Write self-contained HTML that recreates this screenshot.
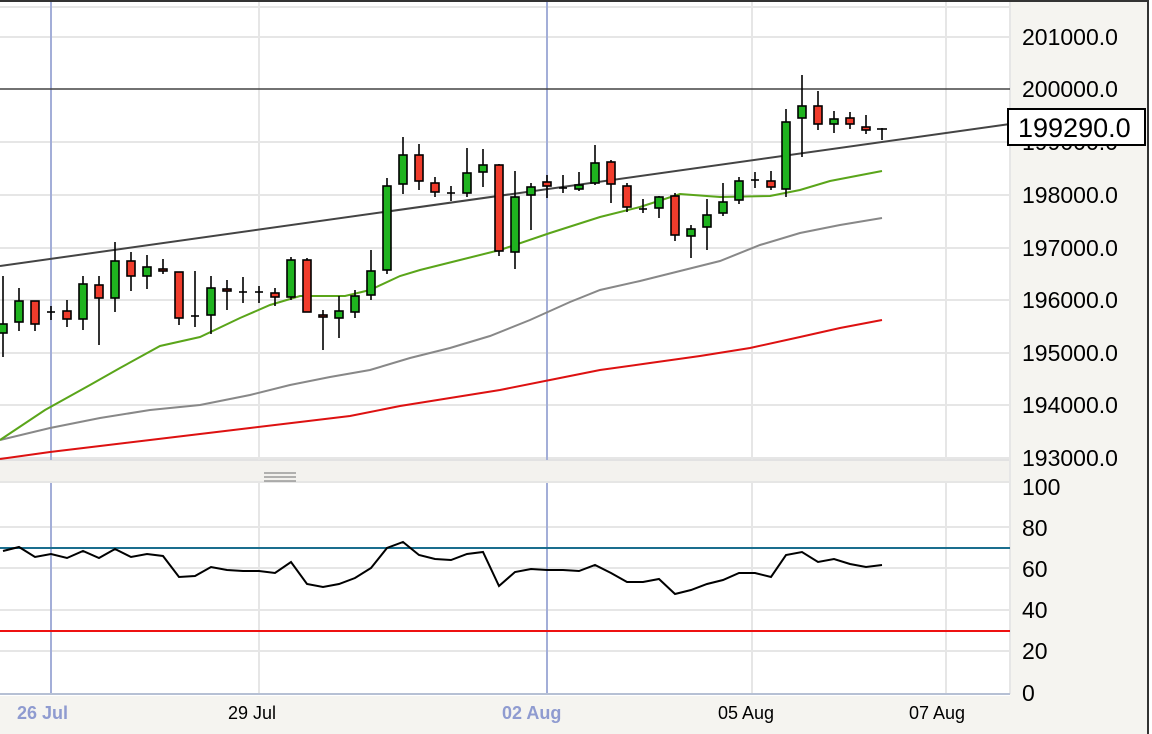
<!DOCTYPE html>
<html><head><meta charset="utf-8"><style>
html,body{margin:0;padding:0;background:#fff;width:1152px;height:734px;overflow:hidden}
svg{display:block;font-family:"Liberation Sans",Arial,sans-serif}
</style></head><body>
<svg width="1152" height="734" viewBox="0 0 1152 734">
<rect x="0" y="0" width="1152" height="734" fill="#fff"/>
<rect x="1010" y="0" width="138" height="734" fill="#f5f4f0"/>
<rect x="0" y="696" width="1010" height="38" fill="#f5f4f0"/>
<rect x="0" y="461" width="1010" height="22" fill="#f3f2ee"/>
<line x1="0" y1="460" x2="1010" y2="460" stroke="#e2e2e2" stroke-width="2"/>
<line x1="0" y1="482" x2="1010" y2="482" stroke="#e2e2e2" stroke-width="1.5"/>
<g stroke="#888" stroke-width="1.2"><line x1="264" y1="473" x2="296" y2="473"/><line x1="264" y1="477" x2="296" y2="477"/><line x1="264" y1="481" x2="296" y2="481"/></g>
<g stroke="#e6e6e6" stroke-width="2">
<line x1="0" y1="7" x2="1010" y2="7"/>
<line x1="0" y1="37" x2="1010" y2="37"/>
<line x1="0" y1="142" x2="1010" y2="142"/>
<line x1="0" y1="195" x2="1010" y2="195"/>
<line x1="0" y1="248" x2="1010" y2="248"/>
<line x1="0" y1="300" x2="1010" y2="300"/>
<line x1="0" y1="353" x2="1010" y2="353"/>
<line x1="0" y1="405" x2="1010" y2="405"/>
<line x1="0" y1="458" x2="1010" y2="458"/>
<line x1="259" y1="0" x2="259" y2="460"/><line x1="752" y1="0" x2="752" y2="460"/><line x1="946" y1="0" x2="946" y2="460"/>
<line x1="259" y1="483" x2="259" y2="694"/><line x1="752" y1="483" x2="752" y2="694"/><line x1="946" y1="483" x2="946" y2="694"/>
<line x1="0" y1="527" x2="1010" y2="527"/><line x1="0" y1="568" x2="1010" y2="568"/><line x1="0" y1="610" x2="1010" y2="610"/><line x1="0" y1="651" x2="1010" y2="651"/>
<line x1="1010" y1="0" x2="1010" y2="694"/>
</g>
<g stroke="#a3aed8" stroke-width="2">
<line x1="51" y1="0" x2="51" y2="460"/><line x1="547" y1="0" x2="547" y2="460"/>
<line x1="51" y1="483" x2="51" y2="694"/><line x1="547" y1="483" x2="547" y2="694"/>
</g>
<line x1="0" y1="694" x2="1010" y2="694" stroke="#b6c0d4" stroke-width="2"/>
<polyline fill="none" stroke="#dd1111" stroke-width="2" points="0,459 50,452 100,446 150,440 200,434 250,428 300,422 350,416 400,406 450,398 500,390 550,380 600,370 650,363 700,356 750,348 800,337 840,328 882,320"/>
<polyline fill="none" stroke="#888" stroke-width="2" points="0,440 50,428 100,418 150,410 200,405 250,395 290,385 330,377 370,370 410,358 450,348 490,336 530,320 570,302 600,290 640,281 680,271 720,261 760,245 800,233 840,225 882,218"/>
<polyline fill="none" stroke="#5aa51a" stroke-width="2" points="0,440 45,410 90,385 120,368 160,346 200,337 240,318 270,305 300,296 345,296 370,290 400,276 420,270 460,260 500,250 550,233 600,217 640,207 680,194 720,197 770,196 800,190 830,181 882,171"/>
<line x1="0" y1="89" x2="1010" y2="89" stroke="#444" stroke-width="1.5"/>
<line x1="0" y1="266" x2="1010" y2="124" stroke="#444" stroke-width="2"/>
<g stroke="#000" stroke-width="1.6">
<line x1="3" y1="276" x2="3" y2="357"/><rect x="-1" y="324" width="8" height="9" fill="#1fb31f"/>
<line x1="19" y1="288" x2="19" y2="331"/><rect x="15" y="301" width="8" height="21" fill="#1fb31f"/>
<line x1="35" y1="301" x2="35" y2="331"/><rect x="31" y="301" width="8" height="23" fill="#f03c2c"/>
<line x1="51" y1="306" x2="51" y2="320"/><line x1="47" y1="312" x2="55" y2="312"/>
<line x1="67" y1="300" x2="67" y2="327"/><rect x="63" y="311" width="8" height="8" fill="#f03c2c"/>
<line x1="83" y1="276" x2="83" y2="330"/><rect x="79" y="284" width="8" height="35" fill="#1fb31f"/>
<line x1="99" y1="276" x2="99" y2="345"/><rect x="95" y="285" width="8" height="13" fill="#f03c2c"/>
<line x1="115" y1="242" x2="115" y2="312"/><rect x="111" y="261" width="8" height="37" fill="#1fb31f"/>
<line x1="131" y1="252" x2="131" y2="291"/><rect x="127" y="261" width="8" height="15" fill="#f03c2c"/>
<line x1="147" y1="255" x2="147" y2="289"/><rect x="143" y="267" width="8" height="9" fill="#1fb31f"/>
<line x1="163" y1="259" x2="163" y2="274"/><rect x="159" y="269" width="8" height="2" fill="#f03c2c"/>
<line x1="179" y1="272" x2="179" y2="325"/><rect x="175" y="272" width="8" height="46" fill="#f03c2c"/>
<line x1="195" y1="271" x2="195" y2="327"/><line x1="191" y1="316" x2="199" y2="316"/>
<line x1="211" y1="276" x2="211" y2="334"/><rect x="207" y="288" width="8" height="27" fill="#1fb31f"/>
<line x1="227" y1="280" x2="227" y2="310"/><rect x="223" y="289" width="8" height="2" fill="#f03c2c"/>
<line x1="243" y1="277" x2="243" y2="303"/><line x1="239" y1="292" x2="247" y2="292"/>
<line x1="259" y1="286" x2="259" y2="303"/><line x1="255" y1="292" x2="263" y2="292"/>
<line x1="275" y1="288" x2="275" y2="306"/><rect x="271" y="293" width="8" height="4" fill="#f03c2c"/>
<line x1="291" y1="257" x2="291" y2="300"/><rect x="287" y="260" width="8" height="37" fill="#1fb31f"/>
<line x1="307" y1="258" x2="307" y2="312"/><rect x="303" y="260" width="8" height="52" fill="#f03c2c"/>
<line x1="323" y1="310" x2="323" y2="350"/><rect x="319" y="315" width="8" height="2" fill="#f03c2c"/>
<line x1="339" y1="296" x2="339" y2="338"/><rect x="335" y="311" width="8" height="7" fill="#1fb31f"/>
<line x1="355" y1="290" x2="355" y2="318"/><rect x="351" y="296" width="8" height="16" fill="#1fb31f"/>
<line x1="371" y1="250" x2="371" y2="300"/><rect x="367" y="271" width="8" height="24" fill="#1fb31f"/>
<line x1="387" y1="178" x2="387" y2="274"/><rect x="383" y="186" width="8" height="84" fill="#1fb31f"/>
<line x1="403" y1="137" x2="403" y2="194"/><rect x="399" y="155" width="8" height="29" fill="#1fb31f"/>
<line x1="419" y1="144" x2="419" y2="190"/><rect x="415" y="155" width="8" height="26" fill="#f03c2c"/>
<line x1="435" y1="177" x2="435" y2="197"/><rect x="431" y="183" width="8" height="9" fill="#f03c2c"/>
<line x1="451" y1="186" x2="451" y2="201"/><line x1="447" y1="193" x2="455" y2="193"/>
<line x1="467" y1="148" x2="467" y2="197"/><rect x="463" y="173" width="8" height="20" fill="#1fb31f"/>
<line x1="483" y1="149" x2="483" y2="187"/><rect x="479" y="165" width="8" height="7" fill="#1fb31f"/>
<line x1="499" y1="164" x2="499" y2="256"/><rect x="495" y="165" width="8" height="86" fill="#f03c2c"/>
<line x1="515" y1="171" x2="515" y2="269"/><rect x="511" y="197" width="8" height="55" fill="#1fb31f"/>
<line x1="531" y1="183" x2="531" y2="230"/><rect x="527" y="187" width="8" height="8" fill="#1fb31f"/>
<line x1="547" y1="175" x2="547" y2="198"/><rect x="543" y="182" width="8" height="4" fill="#f03c2c"/>
<line x1="563" y1="175" x2="563" y2="193"/><line x1="559" y1="188" x2="567" y2="188"/>
<line x1="579" y1="172" x2="579" y2="191"/><rect x="575" y="185" width="8" height="4" fill="#1fb31f"/>
<line x1="595" y1="145" x2="595" y2="185"/><rect x="591" y="163" width="8" height="20" fill="#1fb31f"/>
<line x1="611" y1="160" x2="611" y2="203"/><rect x="607" y="162" width="8" height="22" fill="#f03c2c"/>
<line x1="627" y1="183" x2="627" y2="212"/><rect x="623" y="186" width="8" height="21" fill="#f03c2c"/>
<line x1="643" y1="199" x2="643" y2="213"/><line x1="639" y1="209" x2="647" y2="209"/>
<line x1="659" y1="196" x2="659" y2="218"/><rect x="655" y="197" width="8" height="11" fill="#1fb31f"/>
<line x1="675" y1="193" x2="675" y2="241"/><rect x="671" y="196" width="8" height="39" fill="#f03c2c"/>
<line x1="691" y1="225" x2="691" y2="258"/><rect x="687" y="229" width="8" height="7" fill="#1fb31f"/>
<line x1="707" y1="199" x2="707" y2="250"/><rect x="703" y="215" width="8" height="12" fill="#1fb31f"/>
<line x1="723" y1="183" x2="723" y2="216"/><rect x="719" y="202" width="8" height="11" fill="#1fb31f"/>
<line x1="739" y1="177" x2="739" y2="204"/><rect x="735" y="181" width="8" height="19" fill="#1fb31f"/>
<line x1="755" y1="172" x2="755" y2="188"/><line x1="751" y1="180" x2="759" y2="180"/>
<line x1="771" y1="171" x2="771" y2="190"/><rect x="767" y="181" width="8" height="6" fill="#f03c2c"/>
<line x1="786" y1="109" x2="786" y2="197"/><rect x="782" y="122" width="8" height="67" fill="#1fb31f"/>
<line x1="802" y1="75" x2="802" y2="157"/><rect x="798" y="106" width="8" height="12" fill="#1fb31f"/>
<line x1="818" y1="91" x2="818" y2="130"/><rect x="814" y="106" width="8" height="18" fill="#f03c2c"/>
<line x1="834" y1="111" x2="834" y2="133"/><rect x="830" y="119" width="8" height="5" fill="#1fb31f"/>
<line x1="850" y1="112" x2="850" y2="129"/><rect x="846" y="118" width="8" height="6" fill="#f03c2c"/>
<line x1="866" y1="115" x2="866" y2="134"/><rect x="862" y="127" width="8" height="3" fill="#f03c2c"/>
<line x1="882" y1="128" x2="882" y2="140"/><line x1="877" y1="129" x2="887" y2="129"/>
</g>
<line x1="0" y1="548" x2="1010" y2="548" stroke="#1a6e8e" stroke-width="2"/>
<line x1="0" y1="631" x2="1010" y2="631" stroke="#ee1111" stroke-width="2"/>
<polyline fill="none" stroke="#000" stroke-width="2" points="3,551 19,547 35,557 51,554 67,558 83,551 99,558 115,549 131,557 147,554 163,556 179,577 195,576 211,567 227,570 243,571 259,571 275,573 291,562 307,584 323,587 339,584 355,578 371,568 387,548 403,542 419,555 435,559 451,560 467,554 483,552 499,586 515,572 531,569 547,570 563,570 579,571 595,565 611,573 627,582 643,582 659,579 675,594 691,590 707,584 723,580 739,573 755,573 771,577 786,555 802,552 818,562 834,559 850,564 866,567 882,565"/>
<g font-size="23" fill="#000">
<text x="1022" y="45">201000.0</text>
<text x="1022" y="97">200000.0</text>
<text x="1022" y="150">199000.0</text>
<text x="1022" y="203">198000.0</text>
<text x="1022" y="256">197000.0</text>
<text x="1022" y="308">196000.0</text>
<text x="1022" y="361">195000.0</text>
<text x="1022" y="413">194000.0</text>
<text x="1022" y="466">193000.0</text>
<text x="1022" y="495">100</text>
<text x="1022" y="536">80</text>
<text x="1022" y="577">60</text>
<text x="1022" y="618">40</text>
<text x="1022" y="659">20</text>
<text x="1022" y="701">0</text>
</g>
<rect x="1008" y="109" width="137" height="36" fill="#fff" stroke="#000" stroke-width="2"/>
<text x="1018" y="137" font-size="27" fill="#000">199290.0</text>
<g font-size="18">
<text x="17" y="719" fill="#8f9bd0" font-weight="bold">26 Jul</text>
<text x="228" y="719" fill="#000">29 Jul</text>
<text x="502" y="719" fill="#8f9bd0" font-weight="bold">02 Aug</text>
<text x="718" y="719" fill="#000">05 Aug</text>
<text x="909" y="719" fill="#000">07 Aug</text>
</g>
<line x1="0" y1="1" x2="1148" y2="1" stroke="#333" stroke-width="2"/>
<line x1="1148" y1="0" x2="1148" y2="734" stroke="#333" stroke-width="2"/>
<rect x="1149" y="0" width="3" height="734" fill="#fff"/>
</svg>
</body></html>
